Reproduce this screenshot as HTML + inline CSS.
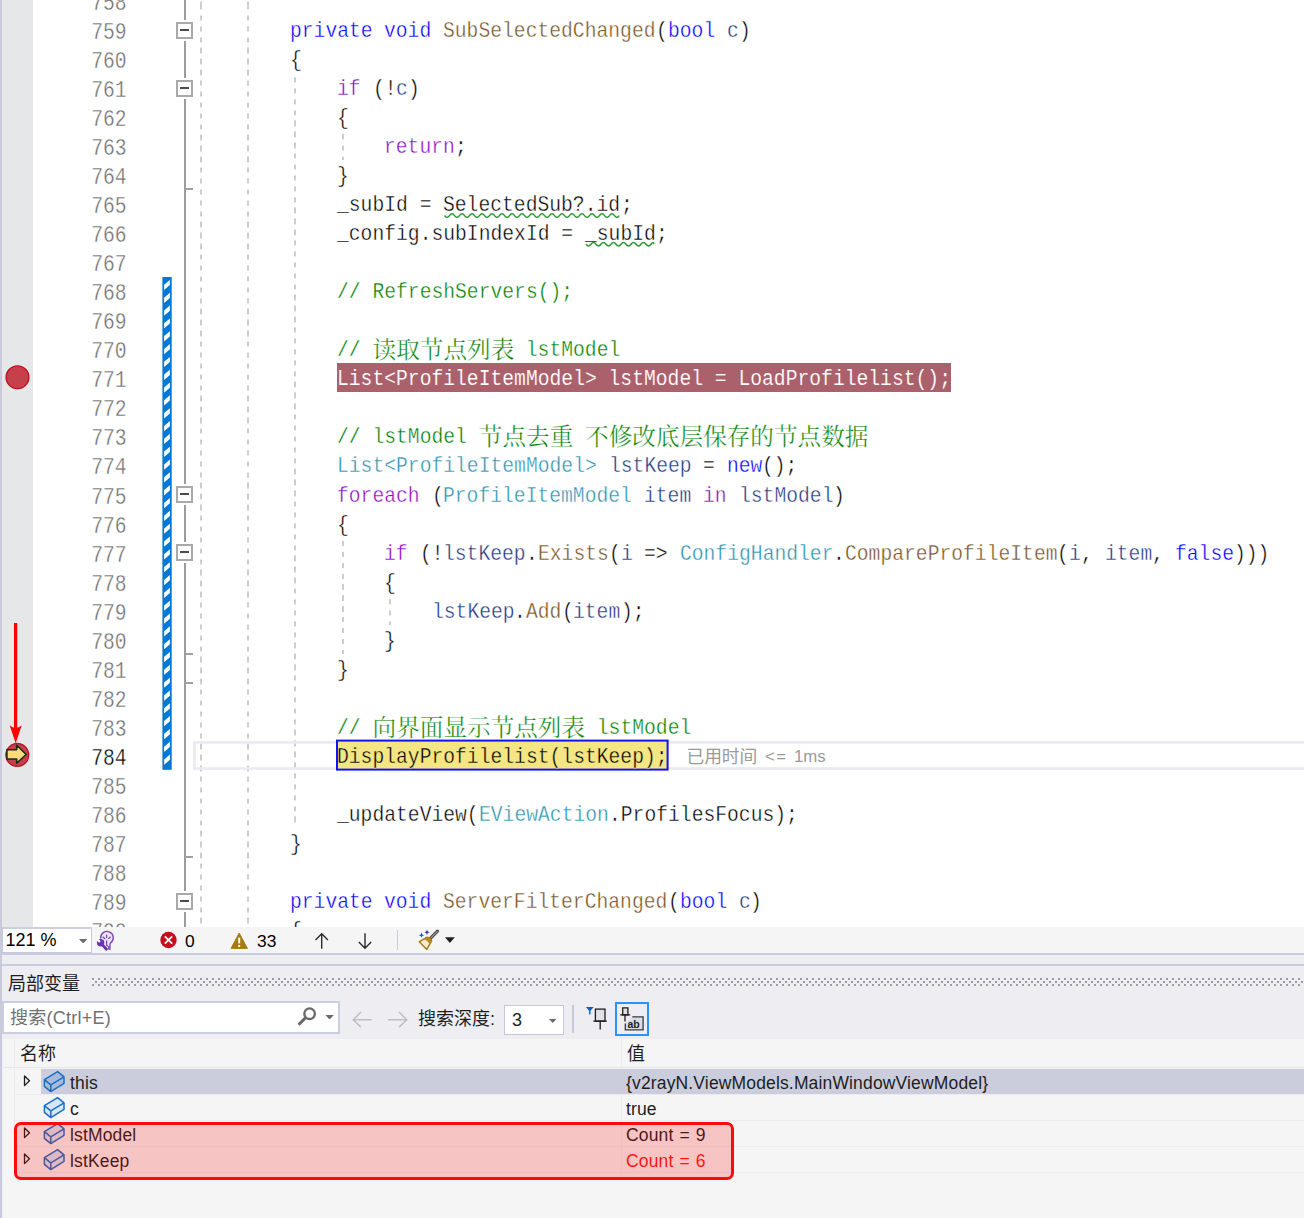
<!DOCTYPE html>
<html lang="zh-CN">
<head>
<meta charset="utf-8">
<title>SubSelectedChanged - 局部变量</title>
<style>
html,body{margin:0;padding:0;}
body{width:1304px;height:1218px;overflow:hidden;background:#fff;position:relative;
 font-family:"Liberation Sans","Noto Sans CJK SC",sans-serif;}
#ed{position:absolute;left:0;top:0;width:1304px;height:927px;overflow:hidden;background:#fff;}
#strip{position:absolute;left:0;top:0;width:2px;height:927px;background:#c9cbdc;}
#margin{position:absolute;left:2px;top:0;width:31px;height:927px;background:#e6e7e8;}
.ln{position:absolute;left:60px;width:67px;height:29px;}
.ln b{position:absolute;right:0;top:0;font-weight:normal;line-height:33px;white-space:pre;
 font-family:"Liberation Mono",monospace;font-size:24.2px;color:#6e6e6e;transform:scaleX(0.813);transform-origin:100% 0;}
.ln.cur b{color:#000;}
.tk{position:absolute;height:29px;line-height:31px;white-space:pre;
 font-family:"Liberation Mono",monospace;font-size:21.5px;color:#000;transform:scaleX(0.9151);transform-origin:0 0;}
.tk.z{font-family:"Noto Serif CJK SC",serif;font-size:23.61px;transform:none;line-height:26px;}
.k{color:#0000ff}.c{color:#8f08c4}.t{color:#2b91af}.m{color:#74531f}.g{color:#008000}.v{color:#1f377f}.p{color:#000}
.tk,.ln b{-webkit-text-stroke:0.38px #fff;}
.tk.z{-webkit-text-stroke:0.25px #fff;}
.w{color:#fff;-webkit-text-stroke:0.15px #ab616b;}
.b{color:#000;-webkit-text-stroke-color:#f5e684;}
.vg{position:absolute;width:2px;background-image:repeating-linear-gradient(to bottom,#cdcdcd 0,#cdcdcd 5.3px,transparent 5.3px,transparent 10.875px);}

.ol{position:absolute;width:2px;background:#9b9b9b;}
.tick{position:absolute;left:185px;width:8px;height:2px;background:#a0a0a0;}
.cb{position:absolute;left:176px;width:13px;height:13px;border:2px solid #a9a9a9;background:#fff;box-shadow:0 0 0 2px #fff;}
.cb i{position:absolute;left:2px;top:5px;width:9px;height:2px;background:#4a4a4a;}
#bphl{position:absolute;left:337px;top:363px;width:614px;height:29px;background:#ab616b;}
#elapsed{position:absolute;left:686.5px;top:743.5px;height:26px;}
#elapsed span{position:absolute;top:0;line-height:26px;font-size:16.8px;color:#9a9a9a;white-space:pre;font-family:"Liberation Sans","Noto Sans CJK SC",sans-serif;}
#elapsed .zs{font-size:17.8px;letter-spacing:-0.1px;}
#elapsed .le{letter-spacing:1.5px;}
#bot{position:absolute;left:0;top:927px;width:1304px;height:291px;background:#eeeef2;overflow:hidden;}
#bstrip{position:absolute;left:0;top:0;width:2px;height:291px;background:#c9cbdc;z-index:5;}
#tb{position:absolute;left:0;top:0;width:1304px;height:26px;background:#f5f5f5;border-bottom:2px solid #c9cade;}
#zoombox{position:absolute;left:2px;top:0;width:88px;height:23px;background:#fff;border:1px solid #c6c8dc;border-top:2px solid #cdcfe1;}
#zoombox span{position:absolute;left:2.5px;top:-2px;line-height:27px;font-size:18px;color:#000;white-space:pre;}
.dd{position:absolute;width:8.4px;height:4.4px;background:#6a6a6a;clip-path:polygon(0 0,100% 0,50% 100%);}
.dd.big{width:9.8px;height:5.8px;background:#1e1e1e;}
.ic{position:absolute;overflow:visible;}
.tt{position:absolute;top:0;line-height:28px;font-size:17.4px;color:#000;}
.sep{position:absolute;width:1.5px;background:#c8cadc;}
#gap{position:absolute;left:0;top:28px;width:1304px;height:9px;background:#eeeef2;border-bottom:2px solid #cbcdde;}
#panel{position:absolute;left:0;top:-927px;width:1304px;height:1218px;pointer-events:none;}
#ptitle{position:absolute;left:8px;top:969.5px;height:28px;line-height:28px;font-size:18px;color:#1e1e1e;}
#dots{position:absolute;left:92px;top:978px;width:1212px;height:8px;background-image:radial-gradient(circle at 1px 1px,#9c9ca5 0.8px,rgba(156,156,165,0) 1.2px),radial-gradient(circle at 1px 1px,#9c9ca5 0.8px,rgba(156,156,165,0) 1.2px);background-size:6px 6px,6px 6px;background-position:0 0,3px 3px;}
#search{position:absolute;left:2px;top:1001px;width:334px;height:29px;background:#fff;border:2px solid #cbcde0;}
#search span{position:absolute;left:6px;top:-1px;line-height:32px;font-size:18px;color:#717171;white-space:pre;letter-spacing:0.25px;}
#depthlbl{position:absolute;left:418px;top:1004px;line-height:30px;font-size:18px;color:#1e1e1e;white-space:pre;}
#depth{position:absolute;left:504px;top:1005px;width:58px;height:28px;background:#fff;border:1px solid #c5c7dc;}
#depth span{position:absolute;left:7px;top:0;line-height:28px;font-size:18px;color:#1e1e1e;}
#abbtn{position:absolute;left:615px;top:1002px;width:30px;height:30px;border:2px solid #2b92fb;background:#ededf3;}
#grid{position:absolute;left:3px;top:1039px;width:1301px;height:179px;background:#f5f5f5;}
#ghead{position:absolute;left:0;top:0;width:1301px;height:28px;border-bottom:1px solid #e4e4ea;}
#ghead span{position:absolute;top:0;line-height:30px;font-size:18px;color:#1e1e1e;}
.colsep{position:absolute;top:0;width:1px;height:135px;background:#ebebf0;}
.row{position:absolute;left:11px;width:1290px;height:25px;border-bottom:1px solid #ececf0;}
.row.sel::before{content:"";position:absolute;left:27px;top:0;right:0;height:25px;background:#cbcddc;}
.row span{position:absolute;top:0;line-height:28.5px;font-size:17.5px;color:#1e1e1e;white-space:pre;letter-spacing:0.15px;word-spacing:1px;}
.row .nm{left:56px;}
.row .val{left:612px;}
.row .red{color:#ff1a1a;}
#redbox{position:absolute;left:11px;top:83px;width:714px;height:52px;border:3px solid #ff0a0a;border-radius:7px;background:rgba(255,0,0,0.2);}
</style>
</head>
<body>
<div id="ed">
<div id="strip"></div><div id="margin"></div>
<!-- indent guides -->
<div class="vg" style="left:200px;top:0;height:927px;background-position:0 4.5px"></div>
<div class="vg" style="left:247px;top:0;height:927px;background-position:0 4.5px"></div>
<div class="vg" style="left:294px;top:77px;height:746px;background-position:0 0.4px"></div>
<div class="vg" style="left:342px;top:134px;height:26px;background-position:0 0.6px"></div>
<div class="vg" style="left:342px;top:541px;height:113px"></div>
<div class="vg" style="left:389px;top:599px;height:26px;background-position:0 0.3px"></div>
<!-- outlining -->
<div class="ol" style="left:184px;top:0;height:927px"></div>
<div class="tick" style="top:188px"></div>
<div class="tick" style="top:653px"></div>
<div class="tick" style="top:682px"></div>
<div class="tick" style="top:856px"></div>
<div class="cb" style="top:22px"><i></i></div>
<div class="cb" style="top:80px"><i></i></div>
<div class="cb" style="top:486px"><i></i></div>
<div class="cb" style="top:544px"><i></i></div>
<div class="cb" style="top:893px"><i></i></div>
<!-- change bar -->
<svg id="chg" width="10" height="493" viewBox="-0.4 0 10 493" style="position:absolute;left:162px;top:277px"><rect x="0" y="0" width="9.300" height="492.800" fill="#0078d4"/><path d="M7.5 2.90 V8.10 L1.7 13.10 V7.80 Z M7.5 15.73 V20.93 L1.7 25.93 V20.63 Z M7.5 28.56 V33.76 L1.7 38.76 V33.46 Z M7.5 41.39 V46.59 L1.7 51.59 V46.29 Z M7.5 54.22 V59.42 L1.7 64.42 V59.12 Z M7.5 67.05 V72.25 L1.7 77.25 V71.95 Z M7.5 79.88 V85.08 L1.7 90.08 V84.78 Z M7.5 92.71 V97.91 L1.7 102.91 V97.61 Z M7.5 105.54 V110.74 L1.7 115.74 V110.44 Z M7.5 118.37 V123.57 L1.7 128.57 V123.27 Z M7.5 131.20 V136.40 L1.7 141.40 V136.10 Z M7.5 144.03 V149.23 L1.7 154.23 V148.93 Z M7.5 156.86 V162.06 L1.7 167.06 V161.76 Z M7.5 169.69 V174.89 L1.7 179.89 V174.59 Z M7.5 182.52 V187.72 L1.7 192.72 V187.42 Z M7.5 195.35 V200.55 L1.7 205.55 V200.25 Z M7.5 208.18 V213.38 L1.7 218.38 V213.08 Z M7.5 221.01 V226.21 L1.7 231.21 V225.91 Z M7.5 233.84 V239.04 L1.7 244.04 V238.74 Z M7.5 246.67 V251.87 L1.7 256.87 V251.57 Z M7.5 259.50 V264.70 L1.7 269.70 V264.40 Z M7.5 272.33 V277.53 L1.7 282.53 V277.23 Z M7.5 285.16 V290.36 L1.7 295.36 V290.06 Z M7.5 297.99 V303.19 L1.7 308.19 V302.89 Z M7.5 310.82 V316.02 L1.7 321.02 V315.72 Z M7.5 323.65 V328.85 L1.7 333.85 V328.55 Z M7.5 336.48 V341.68 L1.7 346.68 V341.38 Z M7.5 349.31 V354.51 L1.7 359.51 V354.21 Z M7.5 362.14 V367.34 L1.7 372.34 V367.04 Z M7.5 374.97 V380.17 L1.7 385.17 V379.87 Z M7.5 387.80 V393.00 L1.7 398.00 V392.70 Z M7.5 400.63 V405.83 L1.7 410.83 V405.53 Z M7.5 413.46 V418.66 L1.7 423.66 V418.36 Z M7.5 426.29 V431.49 L1.7 436.49 V431.19 Z M7.5 439.12 V444.32 L1.7 449.32 V444.02 Z M7.5 451.95 V457.15 L1.7 462.15 V456.85 Z M7.5 464.78 V469.98 L1.7 474.98 V469.68 Z M7.5 477.61 V482.81 L1.7 487.81 V482.51 Z" fill="#fff"/></svg>
<!-- current line box -->
<svg width="1304" height="40" viewBox="0 736 1304 40" style="position:absolute;left:0;top:736px"><rect x="194.400" y="742.400" width="1130" height="26.100" fill="none" stroke="#eaeaf2" stroke-width="2.700"/></svg>
<!-- breakpoint line highlight -->
<div id="bphl"></div>
<!-- current statement highlight -->
<svg width="400" height="40" viewBox="300 736 400 40" style="position:absolute;left:300px;top:736px"><rect x="337" y="740.600" width="330.600" height="29" fill="#f5e684" stroke="#1212f2" stroke-width="2"/></svg>
<div id="elapsed"><span class="zs" style="left:0">已用时间</span><span class="le" style="left:78.500px">&lt;=</span><span style="left:107.500px">1ms</span></div>
<!-- glyph margin icons -->
<svg id="glyphs" width="34" height="927" viewBox="0 0 34 927" style="position:absolute;left:0;top:0">
 <circle cx="17.5" cy="377.3" r="11.400" fill="#c5404b" stroke="#c00a1c" stroke-width="1.300"/>
 <circle cx="17.300" cy="754.900" r="11.400" fill="#c5404b" stroke="#b81426" stroke-width="1.300"/>
 <path d="M6.900 749.700 H16.700 V745.200 L26.200 754.500 L16.700 763.200 V759 H6.900 Z" fill="#ffdb7b" stroke="#1e2a1e" stroke-width="1.600" stroke-linejoin="round"/>
 <path d="M15.600 623 V732" stroke="#ff0000" stroke-width="3.200" fill="none"/>
 <path d="M9.600 725.300 L15.700 743.300 L21.700 725.300 Q15.700 731 9.600 725.300 Z" fill="#ff0000"/>
</svg>

<div class="ln" style="top:-13px"><b>758</b></div>
<div class="ln" style="top:16px"><b>759</b></div>
<span class="tk k" style="left:289.9px;top:16px">private</span>
<span class="tk k" style="left:384.4px;top:16px">void</span>
<span class="tk m" style="left:443.4px;top:16px">SubSelectedChanged</span>
<span class="tk p" style="left:655.9px;top:16px">(</span>
<span class="tk k" style="left:667.7px;top:16px">bool</span>
<span class="tk v" style="left:726.7px;top:16px">c</span>
<span class="tk p" style="left:738.5px;top:16px">)</span>
<div class="ln" style="top:45px"><b>760</b></div>
<span class="tk p" style="left:289.9px;top:45px">{</span>
<div class="ln" style="top:74px"><b>761</b></div>
<span class="tk c" style="left:337.2px;top:74px">if</span>
<span class="tk p" style="left:372.6px;top:74px">(!</span>
<span class="tk v" style="left:396.2px;top:74px">c</span>
<span class="tk p" style="left:408.0px;top:74px">)</span>
<div class="ln" style="top:103px"><b>762</b></div>
<span class="tk p" style="left:337.2px;top:103px">{</span>
<div class="ln" style="top:132px"><b>763</b></div>
<span class="tk c" style="left:384.4px;top:132px">return</span>
<span class="tk p" style="left:455.2px;top:132px">;</span>
<div class="ln" style="top:161px"><b>764</b></div>
<span class="tk p" style="left:337.2px;top:161px">}</span>
<div class="ln" style="top:190px"><b>765</b></div>
<span class="tk p" style="left:337.2px;top:190px">_subId = </span>
<span class="tk p sq" style="left:443.4px;top:190px">SelectedSub?.id</span>
<span class="tk p" style="left:620.5px;top:190px">;</span>
<div class="ln" style="top:219px"><b>766</b></div>
<span class="tk p" style="left:337.2px;top:219px">_config.subIndexId = </span>
<span class="tk p sq" style="left:585.1px;top:219px">_subId</span>
<span class="tk p" style="left:655.9px;top:219px">;</span>
<div class="ln" style="top:248px"><b>767</b></div>
<div class="ln" style="top:277px"><b>768</b></div>
<span class="tk g" style="left:337.2px;top:277px">// RefreshServers();</span>
<div class="ln" style="top:306px"><b>769</b></div>
<div class="ln" style="top:335px"><b>770</b></div>
<span class="tk g" style="left:337.2px;top:335px">// </span>
<span class="tk z g" style="left:372.6px;top:335px">读取节点列表</span>
<span class="tk g" style="left:514.2px;top:335px"> lstModel</span>
<div class="ln" style="top:364px"><b>771</b></div>
<span class="tk w" style="left:337.2px;top:364px">List&lt;ProfileItemModel&gt; lstModel = LoadProfilelist();</span>
<div class="ln" style="top:393px"><b>772</b></div>
<div class="ln" style="top:422px"><b>773</b></div>
<span class="tk g" style="left:337.2px;top:422px">// lstModel </span>
<span class="tk z g" style="left:478.8px;top:422px">节点去重</span>
<span class="tk g" style="left:573.3px;top:422px"> </span>
<span class="tk z g" style="left:585.1px;top:422px">不修改底层保存的节点数据</span>
<div class="ln" style="top:451px"><b>774</b></div>
<span class="tk t" style="left:337.2px;top:451px">List&lt;ProfileItemModel&gt;</span>
<span class="tk v" style="left:608.7px;top:451px">lstKeep</span>
<span class="tk p" style="left:703.1px;top:451px">=</span>
<span class="tk k" style="left:726.7px;top:451px">new</span>
<span class="tk p" style="left:762.1px;top:451px">();</span>
<div class="ln" style="top:481px"><b>775</b></div>
<span class="tk c" style="left:337.2px;top:481px">foreach</span>
<span class="tk p" style="left:431.6px;top:481px">(</span>
<span class="tk t" style="left:443.4px;top:481px">ProfileItemModel</span>
<span class="tk v" style="left:644.1px;top:481px">item</span>
<span class="tk c" style="left:703.1px;top:481px">in</span>
<span class="tk v" style="left:738.5px;top:481px">lstModel</span>
<span class="tk p" style="left:833.0px;top:481px">)</span>
<div class="ln" style="top:510px"><b>776</b></div>
<span class="tk p" style="left:337.2px;top:510px">{</span>
<div class="ln" style="top:539px"><b>777</b></div>
<span class="tk c" style="left:384.4px;top:539px">if</span>
<span class="tk p" style="left:419.8px;top:539px">(!</span>
<span class="tk v" style="left:443.4px;top:539px">lstKeep</span>
<span class="tk p" style="left:526.0px;top:539px">.</span>
<span class="tk m" style="left:537.8px;top:539px">Exists</span>
<span class="tk p" style="left:608.7px;top:539px">(</span>
<span class="tk v" style="left:620.5px;top:539px">i</span>
<span class="tk p" style="left:644.1px;top:539px">=&gt;</span>
<span class="tk t" style="left:679.5px;top:539px">ConfigHandler</span>
<span class="tk p" style="left:833.0px;top:539px">.</span>
<span class="tk m" style="left:844.8px;top:539px">CompareProfileItem</span>
<span class="tk p" style="left:1057.3px;top:539px">(</span>
<span class="tk v" style="left:1069.1px;top:539px">i</span>
<span class="tk p" style="left:1080.9px;top:539px">,</span>
<span class="tk v" style="left:1104.5px;top:539px">item</span>
<span class="tk p" style="left:1151.7px;top:539px">,</span>
<span class="tk k" style="left:1175.3px;top:539px">false</span>
<span class="tk p" style="left:1234.3px;top:539px">)))</span>
<div class="ln" style="top:568px"><b>778</b></div>
<span class="tk p" style="left:384.4px;top:568px">{</span>
<div class="ln" style="top:597px"><b>779</b></div>
<span class="tk v" style="left:431.6px;top:597px">lstKeep</span>
<span class="tk p" style="left:514.2px;top:597px">.</span>
<span class="tk m" style="left:526.0px;top:597px">Add</span>
<span class="tk p" style="left:561.5px;top:597px">(</span>
<span class="tk v" style="left:573.3px;top:597px">item</span>
<span class="tk p" style="left:620.5px;top:597px">);</span>
<div class="ln" style="top:626px"><b>780</b></div>
<span class="tk p" style="left:384.4px;top:626px">}</span>
<div class="ln" style="top:655px"><b>781</b></div>
<span class="tk p" style="left:337.2px;top:655px">}</span>
<div class="ln" style="top:684px"><b>782</b></div>
<div class="ln" style="top:713px"><b>783</b></div>
<span class="tk g" style="left:337.2px;top:713px">// </span>
<span class="tk z g" style="left:372.6px;top:713px">向界面显示节点列表</span>
<span class="tk g" style="left:585.1px;top:713px"> lstModel</span>
<div class="ln cur" style="top:742px"><b>784</b></div>
<span class="tk b" style="left:337.2px;top:742px">DisplayProfilelist(lstKeep);</span>
<div class="ln" style="top:771px"><b>785</b></div>
<div class="ln" style="top:800px"><b>786</b></div>
<span class="tk p" style="left:337.2px;top:800px">_updateView(</span>
<span class="tk t" style="left:478.8px;top:800px">EViewAction</span>
<span class="tk p" style="left:608.7px;top:800px">.ProfilesFocus);</span>
<div class="ln" style="top:829px"><b>787</b></div>
<span class="tk p" style="left:289.9px;top:829px">}</span>
<div class="ln" style="top:858px"><b>788</b></div>
<div class="ln" style="top:887px"><b>789</b></div>
<span class="tk k" style="left:289.9px;top:887px">private</span>
<span class="tk k" style="left:384.4px;top:887px">void</span>
<span class="tk m" style="left:443.4px;top:887px">ServerFilterChanged</span>
<span class="tk p" style="left:667.7px;top:887px">(</span>
<span class="tk k" style="left:679.5px;top:887px">bool</span>
<span class="tk v" style="left:738.5px;top:887px">c</span>
<span class="tk p" style="left:750.3px;top:887px">)</span>
<div class="ln" style="top:916px"><b>790</b></div>
<span class="tk p" style="left:289.9px;top:916px">{</span>
<svg width="1304" height="927" viewBox="0 0 1304 927" style="position:absolute;left:0;top:0;pointer-events:none"><path d="M444.5 215.6 Q447.0 219.2 449.5 215.6 Q452.0 212.0 454.5 215.6 Q457.0 219.2 459.5 215.6 Q462.0 212.0 464.5 215.6 Q467.0 219.2 469.5 215.6 Q472.0 212.0 474.5 215.6 Q477.0 219.2 479.5 215.6 Q482.0 212.0 484.5 215.6 Q487.0 219.2 489.5 215.6 Q492.0 212.0 494.5 215.6 Q497.0 219.2 499.5 215.6 Q502.0 212.0 504.5 215.6 Q507.0 219.2 509.5 215.6 Q512.0 212.0 514.5 215.6 Q517.0 219.2 519.5 215.6 Q522.0 212.0 524.5 215.6 Q527.0 219.2 529.5 215.6 Q532.0 212.0 534.5 215.6 Q537.0 219.2 539.5 215.6 Q542.0 212.0 544.5 215.6 Q547.0 219.2 549.5 215.6 Q552.0 212.0 554.5 215.6 Q557.0 219.2 559.5 215.6 Q562.0 212.0 564.5 215.6 Q567.0 219.2 569.5 215.6 Q572.0 212.0 574.5 215.6 Q577.0 219.2 579.5 215.6 Q582.0 212.0 584.5 215.6 Q587.0 219.2 589.5 215.6 Q592.0 212.0 594.5 215.6 Q597.0 219.2 599.5 215.6 Q602.0 212.0 604.5 215.6 Q607.0 219.2 609.5 215.6 Q612.0 212.0 614.5 215.6 Q617.0 219.2 619.0 215.6" fill="none" stroke="#2b9a34" stroke-width="1.500"/><path d="M586.0 244.2 Q588.5 247.8 591.0 244.2 Q593.5 240.6 596.0 244.2 Q598.5 247.8 601.0 244.2 Q603.5 240.6 606.0 244.2 Q608.5 247.8 611.0 244.2 Q613.5 240.6 616.0 244.2 Q618.5 247.8 621.0 244.2 Q623.5 240.6 626.0 244.2 Q628.5 247.8 631.0 244.2 Q633.5 240.6 636.0 244.2 Q638.5 247.8 641.0 244.2 Q643.5 240.6 646.0 244.2 Q648.5 247.8 651.0 244.2 Q653.5 240.6 654.0 244.2" fill="none" stroke="#2b9a34" stroke-width="1.500"/></svg>
</div>
<div id="bot">
 <div id="bstrip"></div>
 <!-- editor status toolbar -->
 <div id="tb">
  <div id="zoombox"><span>121 %</span><i class="dd" style="left:76px;top:10px"></i></div>
  <svg class="ic" style="left:95px;top:3px" width="22" height="22" viewBox="0 0 22 22">
   <path d="M5.700 8 A6.300 6.300 0 1 1 15.600 12.900 C15 13.600 14.900 14.200 14.900 15.200 V19.600" fill="#ebe3f5" stroke="#7a48b8" stroke-width="1.400" stroke-linecap="round"/>
   <path d="M11.600 5.200 V7.300 M8.200 7.200 L9.700 8.600 M15.200 7.200 L13.600 8.400" stroke="#7a48b8" stroke-width="1.300" stroke-linecap="round" fill="none"/>
   <path d="M11.600 10.400 V15.400 Q11.700 16 13 16 M13.600 16.200 V19.600" stroke="#7a48b8" stroke-width="1.300" fill="none"/>
   <circle cx="5.600" cy="12.700" r="3.700" fill="#6a35ad"/>
   <path d="M5.600 12.700 L11.400 19.200" stroke="#6a35ad" stroke-width="2.800" stroke-linecap="round"/>
   <path d="M4.900 12 L1 8.100" stroke="#f5f5f5" stroke-width="2.400"/>
  </svg>
  <svg class="ic" style="left:160px;top:4px" width="18" height="18" viewBox="0 0 18 18">
   <circle cx="8.500" cy="9" r="8.200" fill="#c50f1f"/>
   <path d="M4.800 5.300 L12.200 12.700 M12.200 5.300 L4.800 12.700" stroke="#fff" stroke-width="1.700" fill="none"/>
  </svg>
  <span class="tt" style="left:185px">0</span>
  <svg class="ic" style="left:230px;top:5px" width="19" height="18" viewBox="0 0 19 18">
   <path d="M9.200 1 L17.400 16.400 H1 Z" fill="#a87b12" stroke="#a87b12" stroke-width="1" stroke-linejoin="round"/>
   <path d="M9.200 5.600 V11.400" stroke="#fff" stroke-width="2"/><circle cx="9.200" cy="14" r="1.150" fill="#fff"/>
  </svg>
  <span class="tt" style="left:257px">33</span>
  <svg class="ic" style="left:313px;top:5px" width="18" height="18" viewBox="0 0 18 18">
   <path d="M8.700 16.800 V1.800 M2.500 8 L8.700 1.800 L14.900 8" stroke="#2b2b2b" stroke-width="1.400" fill="none"/>
  </svg>
  <svg class="ic" style="left:356px;top:5px" width="18" height="18" viewBox="0 0 18 18">
   <path d="M9 1.200 V16.200 M2.800 10 L9 16.200 L15.200 10" stroke="#2b2b2b" stroke-width="1.400" fill="none"/>
  </svg>
  <div class="sep" style="left:396.500px;top:3px;height:20px"></div>
  <svg class="ic" style="left:417px;top:2px" width="24" height="22" viewBox="0 0 24 22">
   <path d="M20.500 2.200 L13.400 9.300" stroke="#4a4a4a" stroke-width="3.200" stroke-linecap="round"/>
   <path d="M20.300 2.400 L14 8.700" stroke="#d0d0d0" stroke-width="0.900" stroke-linecap="round"/>
   <path d="M10.100 8.200 Q13.200 8.600 14.700 11.900 L9.800 20.400 L2.200 12.800 Z" fill="#f3ead2" stroke="#a87b12" stroke-width="1.400" stroke-linejoin="round"/>
   <path d="M10.100 8.200 Q13.200 8.600 14.700 11.900 L12.900 15 Q10.400 11.400 6.900 9.900 Z" fill="#b88a20"/>
   <path d="M4.500 3.600 L5.300 5.400 L7.100 6.200 L5.300 7 L4.500 8.800 L3.700 7 L1.900 6.200 L3.700 5.400 Z" fill="#0a5fc8"/>
   <path d="M10 0.700 L10.800 2.500 L12.600 3.300 L10.800 4.100 L10 5.900 L9.200 4.100 L7.400 3.300 L9.200 2.500 Z" fill="#3a35a8"/>
  </svg>
  <i class="dd big" style="left:445px;top:10.200px"></i>
 </div>
 <div id="gap"></div>
 <!-- locals panel -->
 <div id="panel">
  <div id="ptitle">局部变量</div>
  <div id="dots"></div>
  <div id="search"><span>搜索(Ctrl+E)</span>
   <svg class="ic" style="left:293px;top:4px" width="22" height="22" viewBox="0 0 22 22">
    <circle cx="12.600" cy="6.700" r="5.300" fill="none" stroke="#6a6a6a" stroke-width="2.300"/>
    <path d="M8.400 10.900 L1.600 17.700" stroke="#6a6a6a" stroke-width="3" stroke-linecap="butt"/>
   </svg>
   <i class="dd" style="left:321.400px;top:12.100px"></i>
  </div>
  <svg class="ic" style="left:351px;top:1009px;position:absolute" width="60" height="22" viewBox="0 0 60 22">
   <path d="M20.700 10.700 H2.200 M10 3.100 L2.200 10.700 L10 18.300" stroke="#bdbdbd" stroke-width="1.400" fill="none"/>
   <path d="M37 10.700 H55.800 M48 3.100 L55.800 10.700 L48 18.300" stroke="#bdbdbd" stroke-width="1.400" fill="none"/>
  </svg>
  <div id="depthlbl">搜索深度:</div>
  <div id="depth"><span>3</span><i class="dd" style="left:43.500px;top:12.500px"></i></div>
  <div class="sep" style="left:572px;top:1005px;height:28px"></div>
  <svg class="ic" style="left:584px;top:1004px;position:absolute" width="26" height="28" viewBox="0 0 26 28">
   <path d="M1.900 3 H9.700 L6.500 6.800 V10.600 H5.100 V6.800 Z" fill="#0a5fc8"/>
   <rect x="11.400" y="5.100" width="9.600" height="12" fill="#e2e2e6" stroke="#1e1e1e" stroke-width="1.300"/>
   <path d="M9.300 17.100 H22.800 M16.200 17.100 V25.400" stroke="#1e1e1e" stroke-width="1.300" fill="none"/>
  </svg>
  <div id="abbtn">
   <svg width="30" height="30" viewBox="0 0 30 30" style="position:absolute;left:0;top:0">
    <rect x="5.700" y="3.900" width="5.200" height="7" fill="#e2e2e6" stroke="#1e1e1e" stroke-width="1.300"/>
    <path d="M3.200 10.900 H13.200 M8 10.900 V17.500" stroke="#1e1e1e" stroke-width="1.300" fill="none"/>
    <path d="M8.300 19.600 H26 V12.900 H15.300 V19 Z" fill="#dcdce2"/>
    <path d="M15.300 12.900 H26.100 V25.800 H8.300 V19.600" fill="#dcdce2" stroke="#3a3a3a" stroke-width="1.300"/>
    <text x="10.500" y="23.500" style="font-family:'Liberation Sans',sans-serif;font-size:10.500px;font-weight:bold" fill="#1e1e1e">ab</text>
   </svg>
  </div>
  <!-- grid -->
  <div id="grid">
   <div id="ghead"><span style="left:17px">名称</span><span style="left:624px">值</span></div>
   <div class="colsep" style="left:11px"></div>
   <div class="colsep" style="left:618px"></div>
   <div class="row sel" style="top:30px"><span class="nm">this</span><span class="val">{v2rayN.ViewModels.MainWindowViewModel}</span></div>
   <div class="row" style="top:56px"><span class="nm">c</span><span class="val">true</span></div>
   <div class="row" style="top:82px"><span class="nm">lstModel</span><span class="val">Count = 9</span></div>
   <div class="row" style="top:108px"><span class="nm">lstKeep</span><span class="val red">Count = 6</span></div>
   <svg width="80" height="140" viewBox="0 0 80 140" style="position:absolute;left:0;top:28px">
    <g fill="none" stroke="#1e1e1e" stroke-width="1.300" stroke-linejoin="round">
     <path d="M21.500 9 L26.500 13.800 L21.500 18.600 Z"/>
     <path d="M21.500 61 L26.500 65.800 L21.500 70.600 Z"/>
     <path d="M21.500 87 L26.500 91.800 L21.500 96.600 Z"/>
    </g>
    <g id="cubes" stroke="#1b6ec2" stroke-width="1.500" stroke-linejoin="round">
     <g transform="translate(40,3)"><path d="M1.400 9.600 L14.600 1.600 L21 6.800 L21 13.400 L7.800 21.600 L1.400 16.400 Z" fill="#a9bbdc"/><path d="M1.400 9.600 L7.800 14.800 L21 6.800 M7.800 14.800 V21.600" fill="none"/></g>
     <g transform="translate(40,29)"><path d="M1.400 9.600 L14.600 1.600 L21 6.800 L21 13.400 L7.800 21.600 L1.400 16.400 Z" fill="#d6e6f7"/><path d="M1.400 9.600 L7.800 14.800 L21 6.800 M7.800 14.800 V21.600" fill="none"/></g>
     <g transform="translate(40,55)"><path d="M1.400 9.600 L14.600 1.600 L21 6.800 L21 13.400 L7.800 21.600 L1.400 16.400 Z" fill="#d6e6f7"/><path d="M1.400 9.600 L7.800 14.800 L21 6.800 M7.800 14.800 V21.600" fill="none"/></g>
     <g transform="translate(40,81)"><path d="M1.400 9.600 L14.600 1.600 L21 6.800 L21 13.400 L7.800 21.600 L1.400 16.400 Z" fill="#d6e6f7"/><path d="M1.400 9.600 L7.800 14.800 L21 6.800 M7.800 14.800 V21.600" fill="none"/></g>
    </g>
   </svg>
   <div id="redbox"></div>
  </div>
 </div>
</div>

</body>
</html>
